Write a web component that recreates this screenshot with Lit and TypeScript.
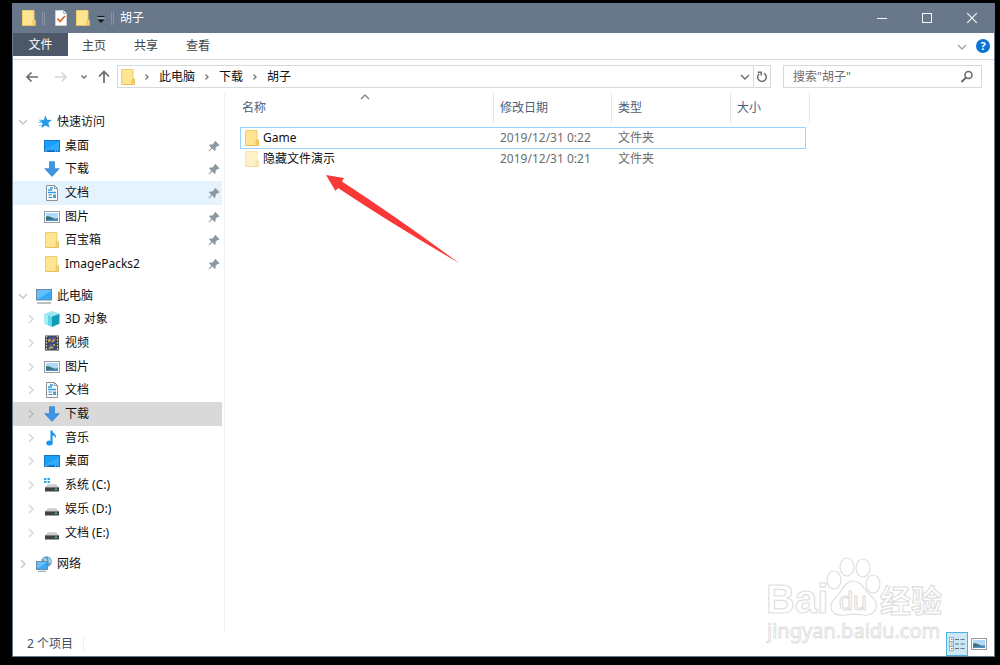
import { LitElement, html, css, svg, nothing } from "lit";
import { customElement, property, state } from "lit/decorators.js";

const folder = (faded = false) => svg`
  <g opacity=${faded ? 0.5 : 1}>
    <path d="M1.500.5h11.500v15H1.500z" fill="#ffe591" stroke="#ecce6c"/>
    <path d="M12.500 10h2v5.500h-2.500v-3z" fill="#f7d56b" stroke="#e2bb4e" stroke-width=".8"/>
    <path d="M2 15.500h11" stroke="#e6c35a"/>
  </g>`;

const drive = svg`
  <path d="M4 7h8l3 4H1z" fill="#d3d5d8"/>
  <rect x="1" y="10" width="14" height="4.500" rx=".6" fill="#3f4246"/>
  <path d="M1 10.300h14" stroke="#8b8f94"/>
  <rect x="11" y="11.600" width="2" height="1.500" fill="#43e052"/>`;

const glyphs: Record<string, unknown> = {
  folder: folder(),
  hidden: folder(true),
  star: svg`
    <path d="M9.500 1.500l1.700 4.300 4.600.2-3.500 3.100 1.300 4.700-4-2.400-4.200 2.600 1.100-4.700L3 6.300l4.600-.4z" fill="#2b9be8"/>
    <path d="M3 6h3M2 8.500h4M3 11.500h3" stroke="#8ccbf5"/>`,
  desktop: svg`
    <rect x=".5" y="2.500" width="15" height="11" fill="#18a0fb" stroke="#1378c8"/>
    <path d="M1 11.500L15 4v8z" fill="#3fb4ff" opacity=".6"/>
    <path d="M1 13h14" stroke="#0f5f9f"/>
    <path d="M1.500 13h1.500M11 13h1M13 13h1" stroke="#d8f0ff"/>`,
  down: svg`<path d="M5.500.7h5v7h4.700L8 15.400.8 7.700h4.700z" fill="#3c96e6" stroke="#2a7fcd" stroke-width=".7"/>`,
  doc: svg`
    <path d="M2.500.5h8l3 3v12h-11z" fill="#fafafa" stroke="#8d9298"/>
    <path d="M10.500.5v3h3" fill="none" stroke="#8d9298"/>
    <path d="M4 5h4M6 3h3M4 7.500h8" stroke="#2c9ce6" stroke-width="1.300"/>
    <path d="M4.500 10h3.500M4.500 12.500h3.500" stroke="#3b83b5"/>
    <rect x="9" y="9.500" width="3" height="3.500" fill="#43a3cf"/>`,
  picture: svg`
    <rect x=".5" y="2.500" width="15" height="11" fill="#fff" stroke="#989ca0"/>
    <rect x="2" y="4" width="12" height="8" fill="#b0d8f8"/>
    <path d="M2 7.500c3-1 5 .5 7 1.500s3 .5 5 .5v2H2z" fill="#3e6f72"/>
    <path d="M2 11c4-1 8-1 12-.6V12H2z" fill="#4a90c8"/>`,
  pc: svg`
    <rect x=".5" y="1.500" width="15" height="10.500" fill="#37aaf7" stroke="#6c8ba3"/>
    <path d="M1 11.500L15 3V2H1z" fill="#7cccff" opacity=".65"/>
    <path d="M1 15h14" stroke="#8997a3" stroke-width="1.200"/>`,
  cube: svg`
    <path d="M8 0l7.500 2.800L8 5.500.5 2.800z" fill="#9ce8f2"/>
    <path d="M.5 2.800L8 5.500V16L.5 12.800z" fill="#5fd5e4"/>
    <path d="M8 5.500l7.500-2.700v10L8 16z" fill="#0f9db6"/>
    <path d="M.5 2.800L4 4v10.200L.5 12.800z" fill="#a5ecf3"/>`,
  video: svg`
    <rect x="1" y=".5" width="14" height="15" fill="#404347"/>
    <path d="M2.500 1v14M13.500 1v14" stroke="#d8dadd" stroke-width="1.300" stroke-dasharray="1.500 1.500"/>
    <rect x="4.500" y="1.500" width="7" height="6" fill="#3557a4"/>
    <rect x="4.500" y="8.500" width="7" height="6" fill="#31599b"/>
    <path d="M5 7V5h2M8 7l3-3M5 14l2-2 2 1M9 10h2" stroke="#e5aa40" fill="none" stroke-width="1.500"/>
    <path d="M9 3h2v2M5 10h2" stroke="#c04a3c" fill="none"/>`,
  music: svg`
    <path d="M6.500.5H8.500c0 3 4.500 3.500 3.500 8-.6-2-1.800-2.800-3.500-3.200V13h-2z" fill="#1593f1"/>
    <ellipse cx="5.500" cy="13" rx="3.200" ry="2.500" fill="#1593f1"/>`,
  drive,
  system: svg`${drive}<path d="M0 1h2.500v2H0zM3.500 1h2.500v2H3.500zM0 4h2.500v2H0zM3.500 4h2.500v2H3.500z" fill="#1fb2ee"/>`,
  network: svg`
    <circle cx="10.500" cy="5.500" r="5.300" fill="#5f9fc0"/>
    <path d="M7 2.500c2-1 3 0 4 1.500s-1 2-2 3M12 1c2 1 3 3 3.300 5L13 8z" fill="#a9d3df"/>
    <rect x=".5" y="5.500" width="11" height="8" fill="#37a9f5" stroke="#6c8ba3"/>
    <path d="M1 13l10-7H1z" fill="#8ad2ff" opacity=".6"/>
    <path d="M2 15.300h8" stroke="#8997a3"/>`,
  checked: svg`
    <path d="M2.500.5h8l3 3v12h-11z" fill="#fff" stroke="#c9ccd1"/>
    <path d="M10.500.5v3h3" fill="#e4e6e8" stroke="#b2b6bb"/>
    <path d="M4.500 8.500l2.500 3 5-5.500" fill="none" stroke="#e2622c" stroke-width="1.800"/>`,
  overflow: svg`<path d="M4.500 6.500h7" stroke="#14181d" stroke-width="1.200"/><path d="M4.500 9.500h7L8 13z" fill="#14181d"/><path d="M4.500 8h7" stroke="#d5dae0" stroke-width=".8"/>`,
  min: svg`<path d="M3 8.500h10" stroke="currentColor"/>`,
  max: svg`<rect x="3.500" y="3.500" width="9" height="9" fill="none" stroke="currentColor"/>`,
  close: svg`<path d="M3.200 3.200l9.600 9.600M12.800 3.200l-9.600 9.600" stroke="currentColor" stroke-width="1.200"/>`,
  chevDown: svg`<path d="M4 6l4 4 4-4" fill="none" stroke="currentColor" stroke-width="1.400"/>`,
  chevSmall: svg`<path d="M5.500 6.500L8 9l2.500-2.500" fill="none" stroke="currentColor" stroke-width="1.400"/>`,
  chevRight: svg`<path d="M6 4l4 4-4 4" fill="none" stroke="currentColor" stroke-width="1.300"/>`,
  crumb: svg`<path d="M6.500 5.500L9 8l-2.500 2.500" fill="none" stroke="currentColor" stroke-width="1.400"/>`,
  chevUp: svg`<path d="M4 10l4-4 4 4" fill="none" stroke="currentColor" stroke-width="1.200"/>`,
  back: svg`<path d="M14 8H3M7.500 3.500L3 8l4.500 4.500" fill="none" stroke="currentColor" stroke-width="1.700"/>`,
  forward: svg`<path d="M2 8h11M8.500 3.500L13 8l-4.500 4.500" fill="none" stroke="currentColor" stroke-width="1.700"/>`,
  up: svg`<path d="M8 14V3M3 7.500L8 2.500l5 5" fill="none" stroke="currentColor" stroke-width="1.700"/>`,
  refresh: svg`<path d="M10 4.300A4.300 4.300 0 1 1 5.200 4.800M3.800 3.200h3.400v3.300" fill="none" stroke="currentColor" stroke-width="1.500"/>`,
  search: svg`<circle cx="9.500" cy="6" r="3.500" fill="none" stroke="currentColor" stroke-width="1.600"/><path d="M7 8.500L2.500 13" stroke="currentColor" stroke-width="2"/>`,
  pin: svg`<path d="M9.500 3l4 4.200-1 .9-1-.2-2 2 .2 2.200-1 .9-2.400-2.400L3 13.500l-.6-.6 2.900-3.200-2.300-2.400 1-.9 2.400.2 2-2-.2-.8z" fill="#8c99a3"/>`,
  details: svg`
    <path d="M.5 1.500h4v4h-4zM.5 6h4v4h-4zM.5 10.500h4v4h-4z" fill="#fff" stroke="#8d9aa3" stroke-width=".8"/>
    <path d="M6 3.500h4M11.500 3.500h4M6 8h4M11.500 8h4M6 12.500h4M11.500 12.500h4" stroke="#66737b" stroke-width="1.200"/>
    <path d="M2 3.500h1.500" stroke="#4a87c4"/><path d="M2 8h1.500" stroke="#4a87c4"/><path d="M2 12.500h1.500" stroke="#d04a3c"/>`,
};

const icon = (name: string, cls = "") =>
  html`<svg class="icon ${cls}" viewBox="0 0 16 16" aria-hidden="true">${glyphs[name]}</svg>`;

const base = css`
  *, *::before { box-sizing: border-box; }
  .icon { width: 16px; height: 16px; flex: none; display: block; }
  button {
    border: 0; padding: 0; background: none; color: inherit; font: inherit;
    display: flex; align-items: center; justify-content: center;
  }
  a { color: inherit; text-decoration: none; }
`;

interface Item { icon: string; label: string; pinned?: boolean; }
interface Group { root: Item; open: boolean; items: Item[]; arrows: boolean; }

const groups: Group[] = [
  {
    root: { icon: "star", label: "快速访问" }, open: true, arrows: false,
    items: [
      { icon: "desktop", label: "桌面", pinned: true },
      { icon: "down", label: "下载", pinned: true },
      { icon: "doc", label: "文档", pinned: true },
      { icon: "picture", label: "图片", pinned: true },
      { icon: "folder", label: "百宝箱", pinned: true },
      { icon: "folder", label: "ImagePacks2", pinned: true },
    ],
  },
  {
    root: { icon: "pc", label: "此电脑" }, open: true, arrows: true,
    items: [
      { icon: "cube", label: "3D 对象" },
      { icon: "video", label: "视频" },
      { icon: "picture", label: "图片" },
      { icon: "doc", label: "文档" },
      { icon: "down", label: "下载" },
      { icon: "music", label: "音乐" },
      { icon: "desktop", label: "桌面" },
      { icon: "system", label: "系统 (C:)" },
      { icon: "drive", label: "娱乐 (D:)" },
      { icon: "drive", label: "文档 (E:)" },
    ],
  },
  { root: { icon: "network", label: "网络" }, open: false, arrows: false, items: [] },
];

@customElement("nav-tree")
class NavTree extends LitElement {
  @state() hovered = "0-2";
  @state() selected = "1-4";

  static styles = [base, css`
    :host { display: flex; flex-direction: column; gap: 8px; padding: 17px 2px 56px 0; border-right: 1px solid #f0f0f0; }
    .group { display: flex; flex-direction: column; flex-basis: 0; min-height: max-content; }
    .rows1 { flex-grow: 1; }
    .rows7 { flex-grow: 7; }
    .rows11 { flex-grow: 11; }
    .row { flex: 1; min-height: 20px; display: flex; align-items: center; padding: 0 0 0 2px; }
    .child { padding-left: 10px; }
    .hover { background: #e5f3ff; }
    .selected { background: #d9d9d9; }
    .twist { color: #c4c4c4; width: 16px; height: 16px; margin-right: 5px; }
    .child .twist { color: #d4d4d4; }
    .selected .twist { color: #b4b4b4; }
    .label { margin-left: 5px; flex: 1; white-space: nowrap; color: #111; }
  `];

  row(item: Item, key: string, child: boolean, twist: string | null) {
    const cls = `row${child ? " child" : ""}${key === this.hovered ? " hover" : ""}${key === this.selected ? " selected" : ""}`;
    return html`<a class=${cls} href="#" @click=${(e: Event) => { e.preventDefault(); this.selected = key; }}>
      ${twist ? icon(twist, "twist") : html`<span class="twist"></span>`}
      ${icon(item.icon)}<span class="label">${item.label}</span>
      ${item.pinned ? icon("pin") : nothing}
    </a>`;
  }

  render() {
    return groups.map((g, i) => html`<div class="group rows${g.items.length + 1}">
      ${this.row(g.root, `${i}`, false, g.open ? "chevDown" : "chevRight")}
      ${g.items.map((it, j) => this.row(it, `${i}-${j}`, true, g.arrows ? "chevRight" : null))}
    </div>`);
  }
}

@customElement("file-list")
class FileList extends LitElement {
  @property({ attribute: false }) files = [
    { icon: "folder", name: "Game", date: "2019/12/31 0:22", type: "文件夹" },
    { icon: "hidden", name: "隐藏文件演示", date: "2019/12/31 0:21", type: "文件夹" },
  ];

  static styles = [base, css`
    :host { display: block; position: relative; padding-left: 15px; min-width: 0; }
    table, thead, tbody { display: block; }
    tr { display: grid; grid-template-columns: 254px 118px 119px 1fr; align-items: center; }
    thead tr { width: 570px; height: 30px; }
    tbody { padding-top: 4px; }
    tbody tr { width: 566px; height: 20px; }
    th { height: 100%; display: flex; align-items: center; font-weight: normal; color: #4c607a; padding: 0 6px; border-right: 1px solid #e5e5e5; position: relative; }
    th:first-child { padding-left: 2px; }
    .sort { position: absolute; left: 117px; top: -4px; color: #777; }
    td { padding: 0 6px; color: #6d6d6d; white-space: nowrap; }
    .name { display: flex; align-items: center; gap: 3px; padding: 0 4px; color: #111; }
    tbody .focused { height: 22px; outline: 1px solid #99d1ff; outline-offset: -1px; }
    .arrow { position: absolute; left: 101px; top: 82px; width: 134px; height: 90px; }
  `];

  render() {
    return html`
      <table>
        <thead><tr><th>名称${icon("chevUp", "sort")}</th><th>修改日期</th><th>类型</th><th>大小</th></tr></thead>
        <tbody>
          ${this.files.map((f, i) => html`<tr class=${i === 0 ? "focused" : ""}>
            <td class="name">${icon(f.icon)}<span>${f.name}</span></td>
            <td>${f.date}</td><td>${f.type}</td><td></td>
          </tr>`)}
        </tbody>
      </table>
      <svg class="arrow" viewBox="0 0 134 90" aria-hidden="true">
        <path d="M0 0L18 3l-2 3.500Q72 43 133 88Q66 49 12 13l-2.500 3z" fill="#fb3838"/>
      </svg>`;
  }
}

@customElement("app-root")
class AppRoot extends LitElement {
  static styles = [base, css`
    :host {
      display: flex; min-height: 100vh; box-sizing: border-box; padding: 3px 5px 8px 12px; background: #000;
      font: 12px/16px "Noto Sans", "Noto Sans CJK SC", sans-serif; color: #111;
    }
    .window { flex: 1; min-width: 0; display: flex; flex-direction: column; position: relative; background: #fff; border: 1px solid #68778a; border-top: 0; }
    .title { display: flex; align-items: center; height: 30px; padding-left: 8px; background: #68778a; color: #fff; }
    .sep { width: 3px; height: 13px; border: solid #8693a3; border-width: 0 1px; margin: 0 5px; }
    .quick { display: flex; gap: 6px; margin: 0 2px 0 3px; }
    .overflow { width: 16px; }
    .title .overflow + .sep { margin: 0 6px 0 2px; }
    .caption { flex: 1; font-size: 12px; font-weight: normal; margin: 0; }
    .controls { display: flex; align-self: stretch; color: #f4f6f8; }
    .controls button { width: 45px; }
    .tabs { display: flex; height: 27px; border-bottom: 1px solid #dadbdc; color: #444; }
    .tabs button { width: 52px; height: 25px; }
    .tabs .file { width: 55px; height: 23px; background: #4c5867; color: #fff; }
    .tabs .fold { width: 16px; margin: 1px 6px 0 auto; color: #a0a0a0; }
    .tabs .help { width: 14px; height: 14px; margin: 6px 4px 0 0; border-radius: 50%; background: #0a74d4; color: #fff; font-weight: bold; font-size: 11px; line-height: 14px; }
    .bar { display: flex; align-items: center; height: 33px; padding: 0 12px 0 11px; color: #6b6b6b; }
    .bar .off { color: #d5d5d5; margin-left: 13px; }
    .bar .recent { margin: 0 4px 0 7px; }
    .address { flex: 1; display: flex; align-items: center; height: 23px; margin: 0 12px 0 5px; border: 1px solid #d9d9d9; }
    .address ol { flex: 1; display: flex; align-items: center; margin: 0; padding: 0 0 0 2px; list-style: none; color: #111; }
    .address li { display: flex; align-items: center; }
    .address li .icon { margin: 0 4px; color: #777; }
    .address li:first-of-type .icon { margin: 0 4px 0 3px; }
    .address .refresh { align-self: stretch; width: 17px; border-left: 1px solid #d9d9d9; }
    .search { width: 199px; height: 23px; display: flex; align-items: center; border: 1px solid #d9d9d9; padding: 0 6px 0 9px; }
    .search input { flex: 1; min-width: 0; border: 0; padding: 0; outline: 0; background: none; font: inherit; color: #6d6d6d; }
    .search input::placeholder { color: #6d6d6d; opacity: 1; }
    .body { flex: 1; display: grid; grid-template-columns: 212px 1fr; }
    .status { display: flex; align-items: center; height: 24px; padding-left: 14px; color: #3d5068; }
    .status .count { padding-right: 10px; line-height: 12px; border-right: 1px solid #eee; }
    .views { margin-left: auto; padding-right: 4px; display: flex; }
    .views button { width: 22px; height: 24px; }
    .views .on { background: #cbe8f6; border: 1px solid #4fb2dc; }
    .mark { position: absolute; right: 48px; bottom: 8px; width: 180px; height: 94px; }
    .mark text, .mark ellipse, .mark path { fill: #fff; stroke: #dfdfdf; stroke-width: 1.200; }
    .mark .big { font: bold 40px "Liberation Sans", sans-serif; }
    .mark .du { font: 25px "Liberation Sans", sans-serif; }
    .mark .cjk { font: bold 31px "Noto Sans CJK SC", sans-serif; }
    .mark .url { font: 20px "Noto Sans", sans-serif; stroke-width: 1; }
  `];

  render() {
    return html`
      <div class="window">
        <header class="title">
          ${icon("folder")}<span class="sep"></span>
          <div class="quick">${icon("checked")}${icon("folder")}</div>
          <button class="overflow" aria-label="自定义快速访问工具栏">${icon("overflow")}</button>
          <span class="sep"></span>
          <h1 class="caption">胡子</h1>
          <div class="controls">
            <button aria-label="最小化">${icon("min")}</button>
            <button aria-label="最大化">${icon("max")}</button>
            <button aria-label="关闭">${icon("close")}</button>
          </div>
        </header>
        <div class="tabs">
          <button class="file">文件</button><button>主页</button><button>共享</button><button>查看</button>
          <button class="fold" aria-label="展开功能区">${icon("chevDown")}</button>
          <button class="help" aria-label="帮助">?</button>
        </div>
        <div class="bar">
          <button aria-label="返回">${icon("back")}</button>
          <button class="off" aria-label="前进">${icon("forward")}</button>
          <button class="recent" aria-label="最近浏览的位置">${icon("chevSmall")}</button>
          <button aria-label="上移">${icon("up")}</button>
          <nav class="address" aria-label="地址">
            <ol>
              ${icon("folder")}
              ${["此电脑", "下载", "胡子"].map((p) => html`<li>${icon("crumb")}<a href="#">${p}</a></li>`)}
            </ol>
            <button aria-label="以前的位置">${icon("chevDown")}</button>
            <button class="refresh" aria-label="刷新">${icon("refresh")}</button>
          </nav>
          <label class="search">
            <input type="text" aria-label="搜索" placeholder='搜索"胡子"'>
            ${icon("search")}
          </label>
        </div>
        <div class="body"><nav-tree></nav-tree><file-list></file-list></div>
        <footer class="status">
          <span class="count">2 个项目</span>
          <div class="views">
            <button class="on" aria-label="详细信息">${icon("details")}</button>
            <button aria-label="大图标">${icon("picture")}</button>
          </div>
        </footer>
        <svg class="mark" viewBox="0 0 180 94">
          <text class="big" x="0" y="59">Bai</text>
          <ellipse cx="68" cy="26" rx="7" ry="9"/><ellipse cx="81" cy="13" rx="7" ry="9"/>
          <ellipse cx="97" cy="14" rx="7" ry="9"/><ellipse cx="107" cy="30" rx="7" ry="9"/>
          <path d="M87 27c9 0 11 9 17 14s8 9 6 14-8 7-13 6-12-1-18 0-13-1-14-7 3-9 7-13 7-14 15-14z"/>
          <text class="du" x="73" y="56">du</text>
          <text class="cjk" x="114" y="58">经验</text>
          <text class="url" x="1" y="84">jingyan.baidu.com</text>
        </svg>
      </div>`;
  }
}
